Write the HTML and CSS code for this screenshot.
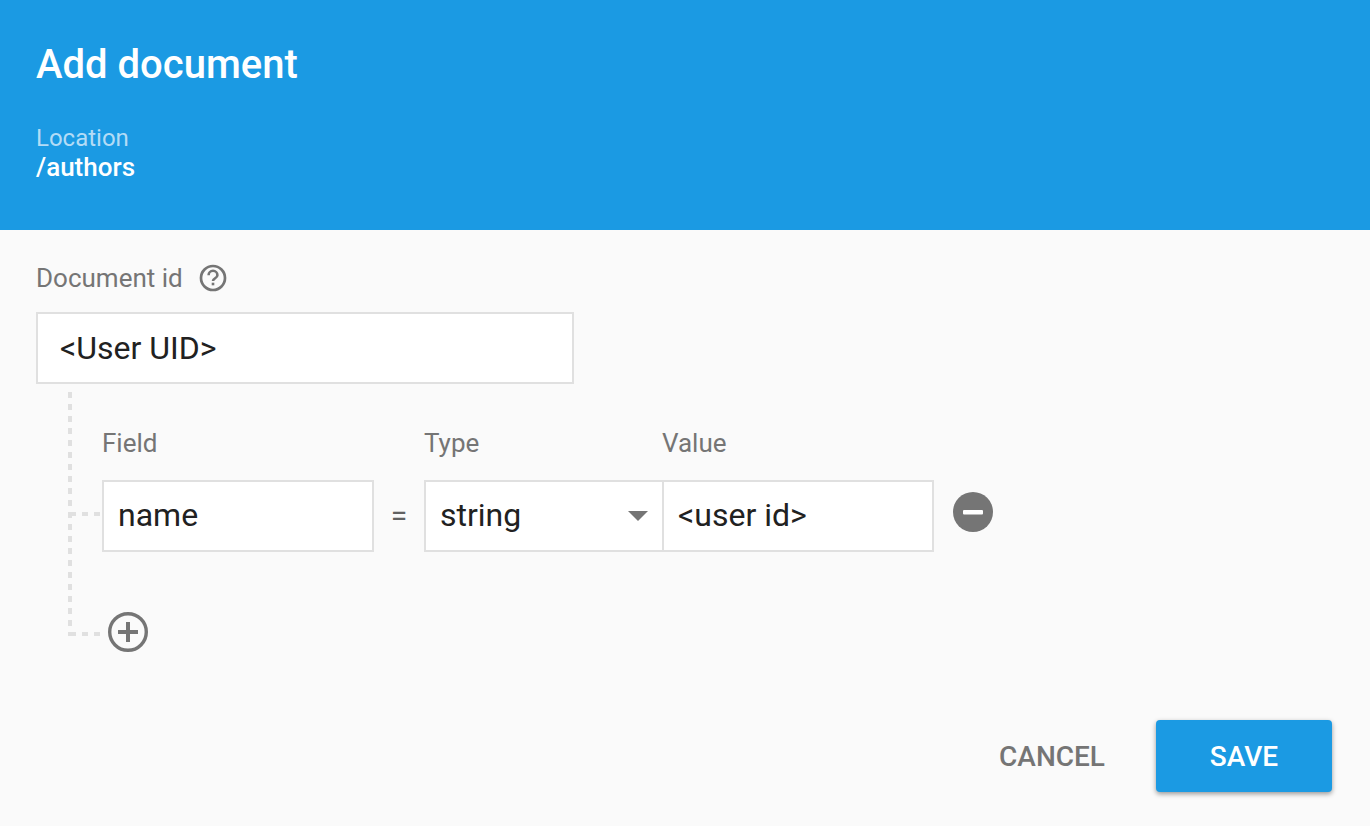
FILE: index.html
```html
<!DOCTYPE html>
<html lang="en">
<head>
<meta charset="utf-8">
<title>Add document</title>
<link rel="stylesheet" href="styles.css">
</head>
<body>
<header class="header">
  <h1 class="title">Add document</h1>
  <div class="location-label">Location</div>
  <div class="location-path">/authors</div>
</header>
<main class="main">
  <div class="doc-label">
    <span>Document id</span>
    <svg class="help" width="28" height="28" viewBox="0 0 28 28" fill="none">
      <circle cx="14" cy="14" r="12" stroke="#757575" stroke-width="2.700"/>
      <path d="M9.600 11.200a4.400 4.400 0 0 1 8.800 0c0 3-4.400 3-4.400 5.800" stroke="#757575" stroke-width="2.600"/>
      <rect x="12.700" y="18.700" width="2.600" height="2.600" fill="#757575"/>
    </svg>
  </div>
  <div class="box doc-box">&lt;User UID&gt;</div>
  <section class="tree">
    <div class="col-labels">
      <span class="col-field">Field</span>
      <span class="col-type">Type</span>
      <span>Value</span>
    </div>
    <div class="row">
      <div class="box field-box">name</div>
      <span class="eq">=</span>
      <div class="box type-box">string<span class="caret"></span></div>
      <div class="box value-box">&lt;user id&gt;</div>
      <svg class="remove" width="40" height="40" viewBox="0 0 40 40">
        <circle cx="20" cy="20" r="20" fill="#757575"/>
        <rect x="10" y="18" width="20" height="4.400" rx="1" fill="#fff"/>
      </svg>
    </div>
    <div class="add-row">
      <svg class="add" width="40" height="40" viewBox="0 0 40 40" fill="none">
        <circle cx="20" cy="20" r="18.300" stroke="#757575" stroke-width="3.400"/>
        <path d="M10 20h20M20 10v20" stroke="#757575" stroke-width="4"/>
      </svg>
    </div>
  </section>
  <div class="actions">
    <span class="cancel">CANCEL</span>
    <span class="save">SAVE</span>
  </div>
</main>
</body>
</html>
```
FILE: styles.css
```css
* { box-sizing: border-box; }
html, body { margin: 0; height: 100%; }
body {
  background: #fafafa;
  font-family: Roboto, "Noto Sans", sans-serif;
  color: #212121;
  overflow: hidden;
}
.header {
  height: 230px;
  background: #1b9ae3;
  color: #fff;
  padding: 41px 36px 0;
}
.title {
  margin: 0 0 34px;
  font-size: 40px;
  line-height: 48px;
  font-weight: 500;
}
.location-label {
  font-size: 24px;
  line-height: 30px;
  color: #b3dcf6;
}
.location-path {
  font-size: 26px;
  line-height: 28px;
  font-weight: 500;
}
.main { padding: 32px 38px 0 36px; }
.doc-label {
  display: flex;
  align-items: center;
  gap: 16px;
  height: 32px;
  font-size: 26px;
  color: #757575;
  margin-bottom: 18px;
}
.box {
  display: flex;
  align-items: center;
  height: 72px;
  background: #fff;
  border: 2px solid #e0e0e0;
  font-size: 32px;
  color: #212121;
}
.doc-box { width: 538px; padding-left: 22px; }
.tree {
  margin: 8px 0 0 32px;
  padding: 35px 0 0 34px;
  height: 244px;
  background:
    repeating-linear-gradient(to bottom, #e0e0e0 0 6px, transparent 6px 12px) 0 0 / 4px 100% no-repeat,
    repeating-linear-gradient(to right, transparent 0 2px, #e0e0e0 2px 8px, transparent 8px 12px) 0 120px / 32px 4px no-repeat,
    repeating-linear-gradient(to right, transparent 0 2px, #e0e0e0 2px 8px, transparent 8px 12px) 0 240px / 32px 4px no-repeat;
}
.col-labels {
  display: flex;
  height: 32px;
  align-items: center;
  font-size: 26px;
  color: #757575;
  margin-bottom: 21px;
}
.col-field { width: 322px; }
.col-type { width: 238px; }
.row { display: flex; align-items: center; }
.field-box, .type-box, .value-box { padding-bottom: 2px; }
.field-box { width: 272px; padding-left: 14px; }
.eq { width: 50px; text-align: center; font-size: 30px; color: #616161; padding-bottom: 2px; }
.type-box {
  width: 240px;
  padding-left: 14px;
  justify-content: space-between;
  padding-right: 14px;
}
.caret {
  width: 0;
  height: 0;
  margin-top: 2px;
  border-left: 10px solid transparent;
  border-right: 10px solid transparent;
  border-top: 10px solid #757575;
}
.value-box { width: 272px; margin-left: -2px; padding-left: 14px; }
.remove { margin-left: 19px; margin-bottom: 8px; }
.add-row { margin: 60px 0 0 6px; height: 40px; }
.add { display: block; }
.actions {
  display: flex;
  justify-content: flex-end;
  align-items: center;
  gap: 51px;
  margin-top: 84px;
}
.cancel { font-size: 28px; font-weight: 500; color: #757575; }
.save {
  display: flex;
  align-items: center;
  justify-content: center;
  width: 176px;
  height: 72px;
  background: #1b9ae3;
  color: #fff;
  border-radius: 4px;
  font-size: 28px;
  font-weight: 500;
  box-shadow: 0 2px 5px rgba(0,0,0,.4);
}
```
